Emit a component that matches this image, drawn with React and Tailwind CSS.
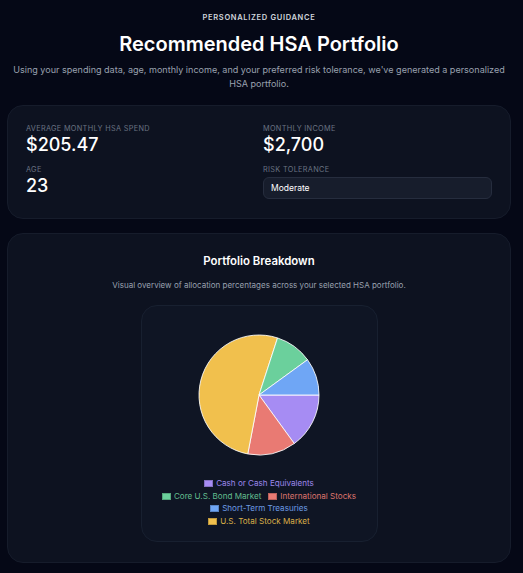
import React from 'react';

const slices = [
    { label: 'Cash or Cash Equivalents', pct: 15, fill: '#a68cf3', text: '#9d87ea' },
    { label: 'International Stocks', pct: 13, fill: '#e97a73', text: '#dd746c' },
    { label: 'U.S. Total Stock Market', pct: 52, fill: '#f1c04d', text: '#d9ae48' },
    { label: 'Core U.S. Bond Market', pct: 10, fill: '#6bd09c', text: '#62bd8e' },
    { label: 'Short-Term Treasuries', pct: 10, fill: '#6fa6f5', text: '#6c9be3' },
];

const legendRows = [
    ['Cash or Cash Equivalents'],
    ['Core U.S. Bond Market', 'International Stocks'],
    ['Short-Term Treasuries'],
    ['U.S. Total Stock Market'],
];

function Pie() {
    const cx = 61;
    const cy = 61;
    const r = 60;
    let start = 0;

    const paths = slices.map(s => {
        const end = start + (s.pct / 100) * Math.PI * 2;
        const x1 = cx + r * Math.cos(start);
        const y1 = cy + r * Math.sin(start);
        const x2 = cx + r * Math.cos(end);
        const y2 = cy + r * Math.sin(end);
        const large = end - start > Math.PI ? 1 : 0;
        start = end;
        return (
            <path
                key={s.label}
                d={`M${cx} ${cy} L${x1} ${y1} A${r} ${r} 0 ${large} 1 ${x2} ${y2} Z`}
                fill={s.fill}
                stroke="#ffffff"
                strokeOpacity="0.85"
                strokeWidth="1"
                strokeLinejoin="round"
            />
        );
    });

    return (
        <svg width="122" height="122" viewBox="0 0 122 122">
            {paths}
        </svg>
    );
}

function LegendItem({ label }) {
    const s = slices.find(x => x.label === label);
    return (
        <span className="flex items-center gap-[3px]">
            <span className="block w-[9px] h-[7px] border border-black/20" style={{ background: s.fill }} />
            <span style={{ color: s.text }}>{label}</span>
        </span>
    );
}

export default function App() {
    return (
        <div className="min-h-screen bg-[#050816] text-white font-['Inter',sans-serif] pl-[7px] pr-[12px] pt-[13px] pb-[10px]">
            <div className="text-center">
                <p className="text-[7.5px] leading-[9px] font-semibold tracking-[0.09em] text-gray-300">PERSONALIZED GUIDANCE</p>
                <h1 className="mt-[10px] text-[20px] leading-[24px] font-semibold">Recommended HSA Portfolio</h1>
                <p className="mt-[7px] text-[9.05px] leading-[14px] text-gray-400">
                    Using your spending data, age, monthly income, and your preferred risk tolerance, we've generated a personalized HSA portfolio.
                </p>
            </div>

            <div className="mt-[14px] rounded-2xl border border-[#161c2b] bg-[#0d1220] pt-[19px] px-[18px] pb-[19px]">
                <div className="grid grid-cols-2 gap-x-2 gap-y-[10px]">
                    <div>
                        <p className="text-[7.3px] leading-[8px] tracking-[0.045em] text-gray-500">AVERAGE MONTHLY HSA SPEND</p>
                        <p className="mt-[1px] text-[18px] leading-[22px] font-medium">$205.47</p>
                    </div>
                    <div>
                        <p className="text-[7.3px] leading-[8px] tracking-[0.045em] text-gray-500">MONTHLY INCOME</p>
                        <p className="mt-[1px] text-[18px] leading-[22px] font-medium">$2,700</p>
                    </div>
                    <div>
                        <p className="text-[7.3px] leading-[8px] tracking-[0.045em] text-gray-500">AGE</p>
                        <p className="mt-[1px] text-[18px] leading-[22px] font-medium">23</p>
                    </div>
                    <div>
                        <p className="text-[7.3px] leading-[8px] tracking-[0.045em] text-gray-500">RISK TOLERANCE</p>
                        <div className="mt-[3px] h-[22px] rounded-md border border-[#262d3e] bg-[#171d2c] px-[7px] flex items-center text-[8.5px]">
                            Moderate
                        </div>
                    </div>
                </div>
            </div>

            <div className="mt-[14px] rounded-2xl border border-[#161c2b] bg-[#0d1220] pt-[20px] pb-[20px] flex flex-col items-center">
                <h2 className="text-[11.4px] leading-[15px] font-semibold">Portfolio Breakdown</h2>
                <p className="mt-[10px] text-[8px] leading-[12px] text-gray-400">
                    Visual overview of allocation percentages across your selected HSA portfolio.
                </p>
                <div className="mt-[14px] w-[237px] h-[237px] rounded-2xl border border-[#182030] bg-[#0f1524] flex flex-col items-center pt-[28px]">
                    <Pie />
                    <div className="mt-[21px] flex flex-col items-center text-[8.1px] leading-[12.7px]">
                        {legendRows.map((row, i) => (
                            <div key={i} className="flex gap-[7px]">
                                {row.map(label => <LegendItem key={label} label={label} />)}
                            </div>
                        ))}
                    </div>
                </div>
            </div>
        </div>
    );
}
